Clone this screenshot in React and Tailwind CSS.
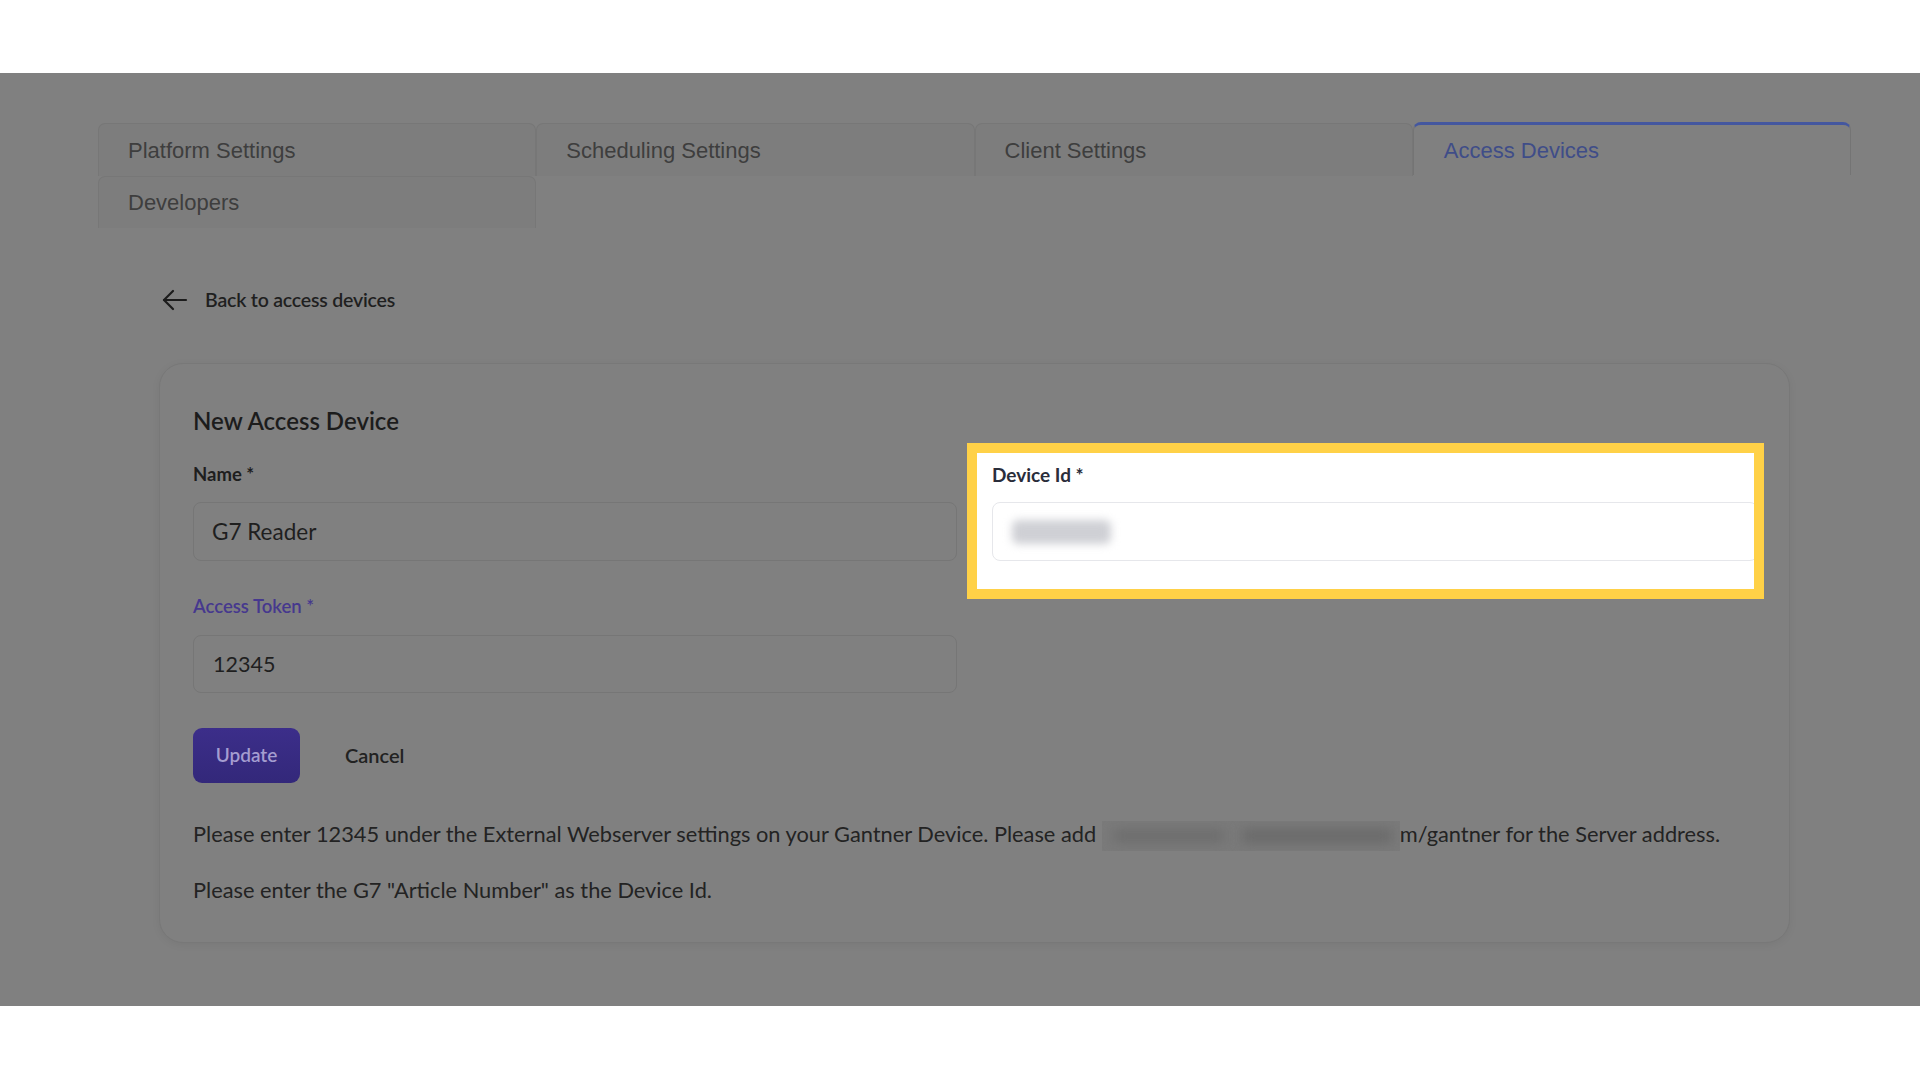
import React from "react";

const bodyFont = { fontFamily: "Lato, 'Noto Sans', sans-serif" };
const tabFont = { fontFamily: "'Liberation Sans', Arial, sans-serif" };

function Tab({ label, active }) {
  if (active) {
    return (
      <div className="h-[53px] flex items-center pl-[30px] rounded-t-[8px] border-t-[3px] border-x border-t-[#44579f] border-x-[#747474] bg-[#808080]">
        <span className="text-[22px] text-[#3f4d88]" style={tabFont}>{label}</span>
      </div>
    );
  }
  return (
    <div className="h-[53px] flex items-center pl-[29px] rounded-t-[7px] border-t border-x border-[#777777] bg-[#7d7d7d] mt-[1px]">
      <span className="text-[22px] text-[#3e3e3e]" style={tabFont}>{label}</span>
    </div>
  );
}

export default function App() {
  return (
    <div className="w-[1920px] h-[1080px] bg-white flex flex-col overflow-hidden" style={bodyFont}>
      <div className="h-[73px] bg-white shrink-0" />
      <div className="h-[933px] shrink-0 bg-[#808080] pl-[98px] pr-[69px] pt-[49px]">
        {/* Tabs */}
        <div className="grid grid-cols-4">
          <Tab label="Platform Settings" />
          <Tab label="Scheduling Settings" />
          <Tab label="Client Settings" />
          <Tab label="Access Devices" active />
          <div className="h-[52px] flex items-center pl-[29px] rounded-t-[7px] border-t border-x border-[#777777] bg-[#7d7d7d]">
            <span className="text-[22px] text-[#3e3e3e]" style={tabFont}>Developers</span>
          </div>
        </div>

        <div className="px-[61px]">
          {/* Back link */}
          <div className="mt-[60px] h-[24px] flex items-center">
            <svg width="26" height="22" viewBox="0 0 26 22" className="ml-[3px]" fill="none" stroke="#1c1c1c" strokeWidth="2.2" strokeLinecap="round" strokeLinejoin="round">
              <path d="M24 11H2" />
              <path d="M11 2L2 11L11 20" />
            </svg>
            <span className="ml-[17px] text-[19.5px] font-semibold text-[#1f1f1f] tracking-[-0.2px]">Back to access devices</span>
          </div>

          {/* Card */}
          <div className="mt-[51px] rounded-[24px] border border-[#787878] bg-[#808080] shadow-[0_2px_8px_rgba(0,0,0,0.06)] px-[33px] pt-[43px] pb-[37px]">
            <h1 className="text-[24px] leading-[28px] font-semibold text-[#1c1c1c]">New Access Device</h1>

            <div className="mt-[28px] grid grid-cols-2 gap-x-[35px]">
              <div>
                <div className="h-[24px] flex items-center text-[18.5px] font-bold text-[#1e1e1e]">Name *</div>
                <div className="mt-[15px] h-[59px] rounded-[8px] border border-[#767676] flex items-center pl-[18px] text-[22.5px] text-[#1f1f1f]">G7 Reader</div>
                <div className="mt-[34px] h-[24px] flex items-center text-[18.5px] font-semibold text-[#46388e]">Access Token *</div>
                <div className="mt-[16px] h-[58px] rounded-[8px] border border-[#767676] flex items-center pl-[19px] text-[21.5px] text-[#1f1f1f]">12345</div>
              </div>
              <div className="self-start -ml-[25px] -mr-[8px] -mt-[20px] border-[10px] border-[#ffd147] bg-white pl-[15px] pt-[10px] pb-[28px] overflow-hidden">
                <div className="h-[24px] flex items-center text-[19px] font-bold text-[#2a2d3a]">Device Id *</div>
                <div className="mt-[15px] h-[59px] w-[calc(100%+4px)] rounded-[8px] border border-[#e6e7eb] bg-white flex items-center pl-[19px]">
                  <span className="inline-block w-[99px] h-[24px] rounded-[6px] bg-[#cfd0d5] blur-[4px]" />
                </div>
              </div>
            </div>

            <div className="mt-[35px] flex items-center">
              <button className="w-[107px] h-[55px] rounded-[9px] bg-[linear-gradient(180deg,#3c2e8a,#33287a)] text-[19px] font-semibold text-[#a49dd0]">Update</button>
              <span className="ml-[45px] -mt-[2px] text-[20px] font-semibold text-[#222222]">Cancel</span>
            </div>

            <p className="mt-[36px] text-[21.8px] leading-[30px] text-[#232323] whitespace-nowrap">
              Please enter 12345 under the External Webserver settings on your Gantner Device. Please add{" "}
              <span className="inline-block align-middle w-[298px] h-[30px] bg-[#7a7a7a] relative overflow-hidden">
                <span className="absolute left-[12px] top-[9px] w-[110px] h-[12px] bg-[#6c6c6c] blur-[6px]" />
                <span className="absolute left-[140px] top-[8px] w-[150px] h-[14px] bg-[#6a6a6a] blur-[6px]" />
              </span>
              m/gantner for the Server address.
            </p>
            <p className="mt-[24px] text-[21.8px] leading-[30px] text-[#232323]">
              Please enter the G7 "Article Number" as the Device Id.
            </p>
          </div>
        </div>
      </div>
      <div className="flex-1 bg-white" />
    </div>
  );
}
